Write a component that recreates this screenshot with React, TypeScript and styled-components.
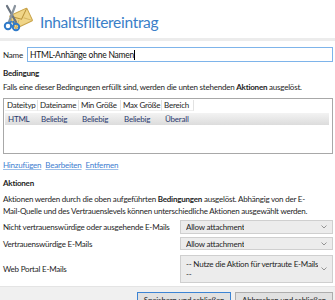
import React from 'react';
import styled, { createGlobalStyle } from 'styled-components';

const Global = createGlobalStyle`
  html, body {
    margin: 0;
    padding: 0;
    background: #ffffff;
    overflow: hidden;
  }
  body {
    font-family: "Lato", "Noto Sans", sans-serif;
    font-size: 8px;
    letter-spacing: -0.22px;
    color: #1e1e1e;
  }
`;

const Page = styled.div`
  width: 335px;
  height: 300px;
  display: flex;
  flex-direction: column;
  overflow: hidden;
`;

const Header = styled.div`
  flex-shrink: 0;
  display: flex;
  align-items: center;
  gap: 7px;
  height: 38px;
  padding: 0 3px;
  border-bottom: 3px solid #ececec;
`;

const Title = styled.div`
  font-size: 15.5px;
  letter-spacing: -0.3px;
  color: #3a80c8;
  padding-top: 6px;
`;

const Body = styled.div`
  flex: 1;
  min-height: 0;
  padding: 0 2px 0 3px;
  display: flex;
  flex-direction: column;
`;

const NameRow = styled.div`
  flex-shrink: 0;
  display: flex;
  align-items: center;
  gap: 4px;
  height: 15px;
  margin-top: 6px;
`;

const Input = styled.div`
  flex: 1;
  height: 13px;
  border: 1px solid #7eb4ea;
  padding: 0 2px;
  font-size: 8.5px;
  color: #111;
  display: flex;
  align-items: center;
`;

const Caret = styled.span`
  display: inline-block;
  width: 1px;
  height: 10px;
  background: #000;
`;

const SectionTitle = styled.div<{ $mt: number }>`
  flex-shrink: 0;
  font-weight: 700;
  margin-top: ${p => p.$mt}px;
  line-height: 12px;
`;

const Text = styled.div<{ $mt: number }>`
  flex-shrink: 0;
  margin-top: ${p => p.$mt}px;
  line-height: 12px;
  white-space: nowrap;
`;

const TableBox = styled.div`
  flex-shrink: 0;
  box-sizing: border-box;
  margin-top: 5px;
  height: 56px;
  border: 1px solid #a8a8a8;
  padding: 1px 3px 0 1px;
`;

const Row = styled.div<{ $data?: boolean }>`
  display: grid;
  grid-template-columns: 33px 41px 42px 41px 32px;
  height: ${p => (p.$data ? 12 : 11)}px;
  margin-top: ${p => (p.$data ? 2 : 0)}px;
  ${p =>
    p.$data &&
    `background: linear-gradient(#f3f3f3, #dcdcdc);
     color: #2b3a6e;`}
`;

const HeadCell = styled.div`
  border-right: 1px solid #e2e2e2;
  border-bottom: 1px solid #efefef;
  padding-left: 2px;
  line-height: 11px;
  white-space: nowrap;
  overflow: hidden;
`;

const Cell = styled.div`
  padding-left: 3px;
  line-height: 12px;
  white-space: nowrap;
`;

const Links = styled.div`
  flex-shrink: 0;
  display: flex;
  gap: 4px;
  margin-top: 5px;
  line-height: 12px;
`;

const Link = styled.a`
  color: #3c7dd0;
  text-decoration: underline;
  text-decoration-color: #9dbfe8;
`;

const ActionRow = styled.div<{ $mt: number; $h: number }>`
  flex-shrink: 0;
  display: flex;
  align-items: center;
  justify-content: space-between;
  margin-top: ${p => p.$mt}px;
  height: ${p => p.$h}px;
`;

const Select = styled.div<{ $tall?: boolean }>`
  box-sizing: border-box;
  width: 153px;
  height: 100%;
  background: #ececec;
  border: 1px solid #cfcfcf;
  padding: ${p => (p.$tall ? '3px 12px 0 5px' : '0 12px 0 5px')};
  display: flex;
  align-items: ${p => (p.$tall ? 'flex-start' : 'center')};
  position: relative;
`;

const SelectText = styled.span<{ $tall?: boolean }>`
  display: block;
  white-space: nowrap;
  overflow: hidden;
  line-height: ${p => (p.$tall ? 10 : 12)}px;
`;

const Chevron = styled.svg`
  position: absolute;
  right: 5px;
  top: 50%;
  transform: translateY(-50%);
`;

const Footer = styled.div`
  flex-shrink: 0;
  box-sizing: border-box;
  height: 14px;
  background: #f0f0f0;
  border-top: 1px solid #e4e4e4;
  display: flex;
  justify-content: flex-end;
  align-items: flex-start;
  gap: 4px;
  padding: 5px 2px 0 0;
`;

const Button = styled.div<{ $primary?: boolean }>`
  flex-shrink: 0;
  box-sizing: border-box;
  width: ${p => (p.$primary ? 94 : 98)}px;
  height: 16px;
  border: 1px solid ${p => (p.$primary ? '#3c84d4' : '#adadad')};
  background: #e1e1e1;
  text-align: center;
  line-height: 14px;
`;

function Arrow() {
  return (
    <Chevron width="6" height="4" viewBox="0 0 6 4">
      <path d="M0.5 0.5 L3 3 L5.5 0.5" fill="none" stroke="#8a8a8a" strokeWidth="0.9" />
    </Chevron>
  );
}

function FilterIcon() {
  return (
    <svg width="30" height="30" viewBox="0 0 30 30">
      <g transform="rotate(-25 19 15)">
        <rect x="9" y="7" width="19" height="14" rx="1" fill="#f0d588" stroke="#c9a44a" />
        <path d="M9.5 7.5 L18.5 15 L27.5 7.5" fill="none" stroke="#b8913a" />
        <path d="M9.5 20.5 L16 14.5 M27.5 20.5 L21 14.5" fill="none" stroke="#d5b460" />
      </g>
      <path d="M4 2 L13 18" stroke="#6a7480" strokeWidth="2.2" strokeLinecap="round" />
      <path d="M12 2 L6 18" stroke="#8a949e" strokeWidth="2.2" strokeLinecap="round" />
      <circle cx="5" cy="22" r="3.2" fill="none" stroke="#2f7ac8" strokeWidth="2" />
      <circle cx="13" cy="23" r="3.2" fill="none" stroke="#2f7ac8" strokeWidth="2" />
      <path d="M7 19.5 L8.5 17 M11.5 20 L10 17" stroke="#2f7ac8" strokeWidth="1.8" />
    </svg>
  );
}

export default function App() {
  return (
    <Page>
      <Global />
      <Header>
        <FilterIcon />
        <Title>Inhaltsfiltereintrag</Title>
      </Header>
      <Body>
        <NameRow>
          <span>Name</span>
          <Input>
            HTML-Anhänge ohne Namen
            <Caret />
          </Input>
        </NameRow>
        <SectionTitle $mt={5}>Bedingung</SectionTitle>
        <Text $mt={2}>
          Falls eine dieser Bedingungen erfüllt sind, werden die unten stehenden <b>Aktionen</b> ausgelöst.
        </Text>
        <TableBox>
          <Row>
            <HeadCell>Dateityp</HeadCell>
            <HeadCell>Dateiname</HeadCell>
            <HeadCell>Min Größe</HeadCell>
            <HeadCell>Max Größe</HeadCell>
            <HeadCell>Bereich</HeadCell>
          </Row>
          <Row $data>
            <Cell>HTML</Cell>
            <Cell>Beliebig</Cell>
            <Cell>Beliebig</Cell>
            <Cell>Beliebig</Cell>
            <Cell>Überall</Cell>
          </Row>
        </TableBox>
        <Links>
          <Link>Hinzufügen</Link>
          <Link>Bearbeiten</Link>
          <Link>Entfernen</Link>
        </Links>
        <SectionTitle $mt={6}>Aktionen</SectionTitle>
        <Text $mt={4}>
          Aktionen werden durch die oben aufgeführten <b>Bedingungen</b> ausgelöst. Abhängig von der E-
          <br />
          Mail-Quelle und des Vertrauenslevels können unterschiedliche Aktionen ausgewählt werden.
        </Text>
        <ActionRow $mt={3} $h={14}>
          <span>Nicht vertrauenswürdige oder ausgehende E-Mails</span>
          <Select>
            <SelectText>Allow attachment</SelectText>
            <Arrow />
          </Select>
        </ActionRow>
        <ActionRow $mt={3} $h={13}>
          <span>Vertrauenswürdige E-Mails</span>
          <Select>
            <SelectText>Allow attachment</SelectText>
            <Arrow />
          </Select>
        </ActionRow>
        <ActionRow $mt={5} $h={28}>
          <span>Web Portal E-Mails</span>
          <Select $tall>
            <SelectText $tall>
              -- Nutze die Aktion für vertraute E-Mails
              <br />
              --
            </SelectText>
            <Arrow />
          </Select>
        </ActionRow>
      </Body>
      <Footer>
        <Button $primary>Speichern und schließen</Button>
        <Button>Abbrechen und schließen</Button>
      </Footer>
    </Page>
  );
}
